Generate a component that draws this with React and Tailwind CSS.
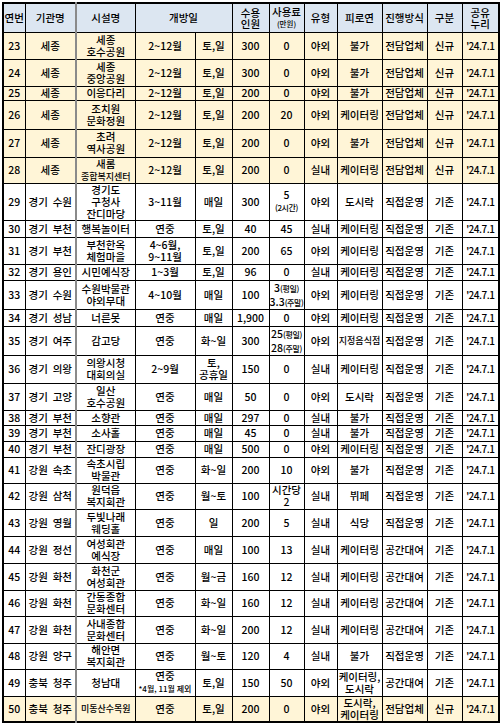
const sm = (t) => <span className="text-[8px] tracking-tighter">{t}</span>;

const rows = [
  { n: 23, org: "세종", fac: "세종\n호수공원", mon: "2~12월", day: "토,일", cap: "300", fee: "0", type: "야외", rec: "불가", how: "전담업체", kind: "신규", h: "h-[27px]", y: true },
  { n: 24, org: "세종", fac: "세종\n중앙공원", mon: "2~12월", day: "토,일", cap: "300", fee: "0", type: "야외", rec: "불가", how: "전담업체", kind: "신규", h: "h-[27px]", y: true },
  { n: 25, org: "세종", fac: "이응다리", mon: "2~12월", day: "토,일", cap: "200", fee: "0", type: "야외", rec: "불가", how: "전담업체", kind: "신규", h: "h-[14px]", y: true },
  { n: 26, org: "세종", fac: "조치원\n문화정원", mon: "2~12월", day: "토,일", cap: "200", fee: "20", type: "야외", rec: "케이터링", how: "전담업체", kind: "신규", h: "h-[29px]", y: true },
  { n: 27, org: "세종", fac: "초려\n역사공원", mon: "2~12월", day: "토,일", cap: "200", fee: "0", type: "야외", rec: "불가", how: "전담업체", kind: "신규", h: "h-[28px]", y: true },
  { n: 28, org: "세종", fac: <>새롬<br /><span className="text-[9px]">종합복지센터</span></>, mon: "2~12월", day: "토,일", cap: "200", fee: "0", type: "실내", rec: "케이터링", how: "전담업체", kind: "신규", h: "h-[26px]", y: true },
  { n: 29, org: "경기 수원", fac: "경기도\n구청사\n잔디마당", mon: "3~11월", day: "매일", cap: "300", fee: <>5<br />{sm("(2시간)")}</>, type: "야외", rec: "도시락", how: "직접운영", kind: "기존", h: "h-[37px]" },
  { n: 30, org: "경기 부천", fac: "행복놀이터", mon: "연중", day: "토,일", cap: "40", fee: "45", type: "실내", rec: "케이터링", how: "직접운영", kind: "기존", h: "h-[17px]" },
  { n: 31, org: "경기 부천", fac: "부천한옥\n체험마을", mon: "4~6월,\n9~11월", day: "토,일", cap: "200", fee: "65", type: "야외", rec: "케이터링", how: "직접운영", kind: "기존", h: "h-[27px]" },
  { n: 32, org: "경기 용인", fac: "시민예식장", mon: "1~3월", day: "토,일", cap: "96", fee: "0", type: "실내", rec: "케이터링", how: "직접운영", kind: "기존", h: "h-[16px]" },
  { n: 33, org: "경기 수원", fac: "수원박물관\n야외무대", mon: "4~10월", day: "매일", cap: "100", fee: <div className="leading-[13px]">3{sm("(평일)")}<br />3.3{sm("(주말)")}</div>, type: "야외", rec: "케이터링", how: "직접운영", kind: "기존", h: "h-[27px]" },
  { n: 34, org: "경기 성남", fac: "너른못", mon: "연중", day: "매일", cap: "1,900", fee: "0", type: "야외", rec: "케이터링", how: "직접운영", kind: "기존", h: "h-[17px]" },
  { n: 35, org: "경기 여주", fac: "감고당", mon: "연중", day: "화~일", cap: "300", fee: <div className="leading-[13px]">25{sm("(평일)")}<br />28{sm("(주말)")}</div>, type: "야외", rec: <span className="text-[9px]">지정음식점</span>, how: "직접운영", kind: "기존", h: "h-[25px]" },
  { n: 36, org: "경기 의왕", fac: "의왕시청\n대회의실", mon: "2~9월", day: "토,\n공휴일", cap: "150", fee: "0", type: "실내", rec: "케이터링", how: "직접운영", kind: "기존", h: "h-[28px]" },
  { n: 37, org: "경기 고양", fac: "일산\n호수공원", mon: "연중", day: "매일", cap: "50", fee: "0", type: "야외", rec: "도시락", how: "직접운영", kind: "기존", h: "h-[27px]" },
  { n: 38, org: "경기 부천", fac: "소향관", mon: "연중", day: "매일", cap: "297", fee: "0", type: "실내", rec: "불가", how: "직접운영", kind: "기존", h: "h-[15px]" },
  { n: 39, org: "경기 부천", fac: "소사홀", mon: "연중", day: "매일", cap: "45", fee: "0", type: "실내", rec: "불가", how: "직접운영", kind: "기존", h: "h-[16px]" },
  { n: 40, org: "경기 부천", fac: "잔디광장", mon: "연중", day: "매일", cap: "500", fee: "0", type: "야외", rec: "케이터링", how: "직접운영", kind: "기존", h: "h-[16px]" },
  { n: 41, org: "강원 속초", fac: "속초시립\n박물관", mon: "연중", day: "화~일", cap: "200", fee: "10", type: "야외", rec: "불가", how: "직접운영", kind: "기존", h: "h-[26px]" },
  { n: 42, org: "강원 삼척", fac: "원덕읍\n복지회관", mon: "연중", day: "월~토", cap: "100", fee: "시간당\n2", type: "실내", rec: "뷔페", how: "직접운영", kind: "기존", h: "h-[26px]" },
  { n: 43, org: "강원 영월", fac: "두빛나래\n웨딩홀", mon: "연중", day: "일", cap: "200", fee: "5", type: "실내", rec: "식당", how: "직접운영", kind: "기존", h: "h-[27px]" },
  { n: 44, org: "강원 정선", fac: "여성회관\n예식장", mon: "연중", day: "매일", cap: "100", fee: "13", type: "실내", rec: "케이터링", how: "공간대여", kind: "기존", h: "h-[27px]" },
  { n: 45, org: "강원 화천", fac: "화천군\n여성회관", mon: "연중", day: "월~금", cap: "160", fee: "12", type: "실내", rec: "케이터링", how: "공간대여", kind: "기존", h: "h-[27px]" },
  { n: 46, org: "강원 화천", fac: "간동종합\n문화센터", mon: "연중", day: "화~일", cap: "160", fee: "12", type: "실내", rec: "케이터링", how: "공간대여", kind: "기존", h: "h-[26px]" },
  { n: 47, org: "강원 화천", fac: "사내종합\n문화센터", mon: "연중", day: "화~일", cap: "200", fee: "12", type: "실내", rec: "케이터링", how: "공간대여", kind: "기존", h: "h-[27px]" },
  { n: 48, org: "강원 양구", fac: "해안면\n복지회관", mon: "연중", day: "월~토", cap: "120", fee: "4", type: "실내", rec: "불가", how: "직접운영", kind: "기존", h: "h-[26px]" },
  { n: 49, org: "충북 청주", fac: "청남대", mon: <>연중<br /><span className="text-[8px] whitespace-nowrap">*4월, 11월 제외</span></>, day: "토,일", cap: "150", fee: "50", type: "야외", rec: "케이터링,\n도시락", how: "공간대여", kind: "기존", h: "h-[27px]" },
  { n: 50, org: "충북 청주", fac: <span className="text-[9px]">미동산수목원</span>, mon: "연중", day: "토,일", cap: "200", fee: "0", type: "야외", rec: "도시락,\n케이터링", how: "전담업체", kind: "신규", h: "h-[24px]", y: true },
];

const td = "border border-black p-0 text-center align-middle whitespace-pre-line";

function Org({ name }) {
  const parts = name.split(" ");
  if (parts.length < 2) return name;
  return (
    <div className="flex justify-between px-[3px]">
      <span>{parts[0]}</span>
      <span>{parts[1]}</span>
    </div>
  );
}

export default function App() {
  return (
    <div className="bg-white w-[501px] h-[724px] pt-[2px] pl-[2px] font-['Noto_Sans_CJK_KR',sans-serif] font-medium text-[10.5px] leading-[12px] text-black">
      <table className="table-fixed border-collapse border-2 border-black w-[496px]">
        <colgroup>
          <col className="w-[22px]" />
          <col className="w-[51px]" />
          <col className="w-[59px]" />
          <col className="w-[60px]" />
          <col className="w-[37px]" />
          <col className="w-[37px]" />
          <col className="w-[35px]" />
          <col className="w-[33px]" />
          <col className="w-[45px]" />
          <col className="w-[45px]" />
          <col className="w-[35px]" />
          <col className="w-[37px]" />
        </colgroup>
        <thead>
          <tr className="h-[29px] bg-[#dce6f1]">
            <th className={`${td} font-medium border-l-2`}>연번</th>
            <th className={`${td} font-medium border-r-2 border-r-[#8a8a8a]`}>기관명</th>
            <th className={`${td} font-medium`}>시설명</th>
            <th colSpan={2} className={`${td} font-medium`}>개방일</th>
            <th className={`${td} font-medium leading-[11px]`}>{"수용\n인원"}</th>
            <th className={`${td} font-medium leading-[11px]`}>
              사용료
              <br />
              <span className="text-[7.5px]">(만원)</span>
            </th>
            <th className={`${td} font-medium`}>유형</th>
            <th className={`${td} font-medium`}>피로연</th>
            <th className={`${td} font-medium`}>진행방식</th>
            <th className={`${td} font-medium`}>구분</th>
            <th className={`${td} font-medium border-r-2 leading-[11px]`}>{"공유\n누리"}</th>
          </tr>
        </thead>
        <tbody>
          {rows.map((r) => (
            <tr key={r.n} className={`${r.h} ${r.y ? "bg-[#fff5d7]" : "bg-white"}`}>
              <td className={`${td} border-l-2`}>{r.n}</td>
              <td className={`${td} border-r-2 border-r-[#8a8a8a]`}><Org name={r.org} /></td>
              <td className={td}>{r.fac}</td>
              <td className={td}>{r.mon}</td>
              <td className={td}>{r.day}</td>
              <td className={td}>{r.cap}</td>
              <td className={td}>{r.fee}</td>
              <td className={td}>{r.type}</td>
              <td className={td}>{r.rec}</td>
              <td className={td}>{r.how}</td>
              <td className={td}>{r.kind}</td>
              <td className={`${td} border-r-2 tracking-tighter text-[10px]`}>'24.7.1</td>
            </tr>
          ))}
        </tbody>
      </table>
    </div>
  );
}
